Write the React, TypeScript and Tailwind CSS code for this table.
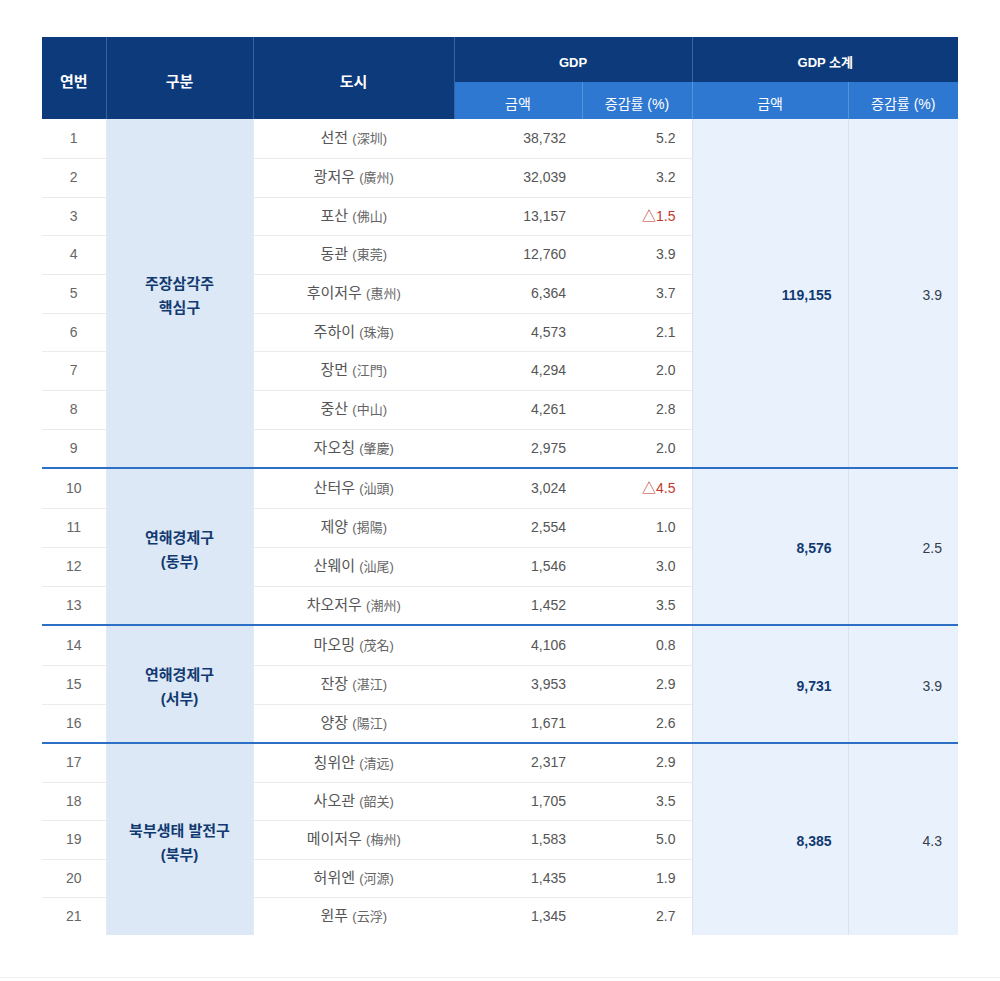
import React from "react";

type Row = { n: number; ko: string; zh: string; amt: string; rate: string; neg?: boolean; h: string };
type Group = { label: string[]; rows: Row[]; sub: string; subRate: string };

const groups: Group[] = [
  {
    label: ["주장삼각주", "핵심구"],
    sub: "119,155",
    subRate: "3.9",
    rows: [
      { n: 1, ko: "선전", zh: "深圳", amt: "38,732", rate: "5.2", h: "h-[39px]" },
      { n: 2, ko: "광저우", zh: "廣州", amt: "32,039", rate: "3.2", h: "h-[39px]" },
      { n: 3, ko: "포산", zh: "佛山", amt: "13,157", rate: "1.5", neg: true, h: "h-[38px]" },
      { n: 4, ko: "동관", zh: "東莞", amt: "12,760", rate: "3.9", h: "h-[39px]" },
      { n: 5, ko: "후이저우", zh: "惠州", amt: "6,364", rate: "3.7", h: "h-[39px]" },
      { n: 6, ko: "주하이", zh: "珠海", amt: "4,573", rate: "2.1", h: "h-[38px]" },
      { n: 7, ko: "장먼", zh: "江門", amt: "4,294", rate: "2.0", h: "h-[39px]" },
      { n: 8, ko: "중산", zh: "中山", amt: "4,261", rate: "2.8", h: "h-[39px]" },
      { n: 9, ko: "자오칭", zh: "肇慶", amt: "2,975", rate: "2.0", h: "h-[39px]" },
    ],
  },
  {
    label: ["연해경제구", "(동부)"],
    sub: "8,576",
    subRate: "2.5",
    rows: [
      { n: 10, ko: "산터우", zh: "汕頭", amt: "3,024", rate: "4.5", neg: true, h: "h-[40px]" },
      { n: 11, ko: "제양", zh: "揭陽", amt: "2,554", rate: "1.0", h: "h-[39px]" },
      { n: 12, ko: "산웨이", zh: "汕尾", amt: "1,546", rate: "3.0", h: "h-[39px]" },
      { n: 13, ko: "차오저우", zh: "潮州", amt: "1,452", rate: "3.5", h: "h-[39px]" },
    ],
  },
  {
    label: ["연해경제구", "(서부)"],
    sub: "9,731",
    subRate: "3.9",
    rows: [
      { n: 14, ko: "마오밍", zh: "茂名", amt: "4,106", rate: "0.8", h: "h-[40px]" },
      { n: 15, ko: "잔장", zh: "湛江", amt: "3,953", rate: "2.9", h: "h-[39px]" },
      { n: 16, ko: "양장", zh: "陽江", amt: "1,671", rate: "2.6", h: "h-[39px]" },
    ],
  },
  {
    label: ["북부생태 발전구", "(북부)"],
    sub: "8,385",
    subRate: "4.3",
    rows: [
      { n: 17, ko: "칭위안", zh: "清远", amt: "2,317", rate: "2.9", h: "h-[39px]" },
      { n: 18, ko: "사오관", zh: "韶关", amt: "1,705", rate: "3.5", h: "h-[38px]" },
      { n: 19, ko: "메이저우", zh: "梅州", amt: "1,583", rate: "5.0", h: "h-[39px]" },
      { n: 20, ko: "허위엔", zh: "河源", amt: "1,435", rate: "1.9", h: "h-[38px]" },
      { n: 21, ko: "윈푸", zh: "云浮", amt: "1,345", rate: "2.7", h: "h-[38px]" },
    ],
  },
];

export default function App() {
  return (
    <div
      className="w-[1000px] min-h-[981px] bg-white"
      style={{ fontFamily: '"Liberation Sans", Arial, "Noto Sans CJK KR", sans-serif' }}
    >
      <div className="h-[978px] border-b border-[#eeeeee] pt-[37px] pl-[42px]">
        <table className="w-[916px] table-fixed border-collapse text-[14px]">
          <colgroup>
            <col className="w-[64px]" />
            <col className="w-[147px]" />
            <col className="w-[201px]" />
            <col className="w-[128px]" />
            <col className="w-[110px]" />
            <col className="w-[156px]" />
            <col className="w-[110px]" />
          </colgroup>
          <thead>
            <tr className="h-[45px] bg-[#0d3a7b] font-bold text-white">
              <th rowSpan={2} className="border-r border-[#3763a3] pt-[8px] text-center text-[15px]">연번</th>
              <th rowSpan={2} className="border-r border-[#3763a3] pt-[8px] text-center text-[15px]">구분</th>
              <th rowSpan={2} className="border-r border-[#3763a3] pt-[8px] text-center text-[15px]">도시</th>
              <th colSpan={2} className="border-r border-[#3763a3] pt-[7px] text-center text-[13px]">GDP</th>
              <th colSpan={2} className="pt-[7px] text-center text-[13px]">GDP 소계</th>
            </tr>
            <tr className="h-[37px] bg-[#2e78d2] font-normal text-white">
              <th className="border-r border-[#5592dc] pt-[7px] text-center font-normal">금액</th>
              <th className="border-r border-[#5592dc] pt-[7px] text-center font-normal">증감률 (%)</th>
              <th className="border-r border-[#5592dc] pt-[7px] text-center font-normal">금액</th>
              <th className="pt-[7px] text-center font-normal">증감률 (%)</th>
            </tr>
          </thead>
          {groups.map((g, gi) => (
            <tbody
              key={gi}
              className={gi < groups.length - 1 ? "border-b-2 border-[#2d6fc4]" : ""}
            >
              {g.rows.map((r, ri) => {
                const last = ri === g.rows.length - 1;
                const rb = last ? "" : "border-b border-[#ebebeb]";
                return (
                  <tr key={r.n} className={r.h}>
                    <td className={`${rb} text-center text-[#666666]`}>{r.n}</td>
                    {ri === 0 && (
                      <td
                        rowSpan={g.rows.length}
                        className="border-x border-[#e3ebf5] bg-[#dce8f6] pt-[6px] text-center text-[15px] font-bold leading-[24px] text-[#123a70]"
                      >
                        {g.label.map((l, li) => (
                          <div key={li}>{l}</div>
                        ))}
                      </td>
                    )}
                    <td className={`${rb} text-center text-[15px] text-[#555555]`}>
                      {r.ko} <span className="text-[13px] text-[#666666]">({r.zh})</span>
                    </td>
                    <td className={`${rb} pr-[16px] text-right text-[#555555]`}>{r.amt}</td>
                    <td className={`${rb} pr-[16px] text-right ${r.neg ? "text-[#c0392b]" : "text-[#555555]"}`}>
                      {r.neg ? "△" : ""}
                      {r.rate}
                    </td>
                    {ri === 0 && (
                      <>
                        <td
                          rowSpan={g.rows.length}
                          className="border-x border-[#d8e3f0] bg-[#e9f2fc] pt-[4px] pr-[16px] text-right font-bold text-[#123a70]"
                        >
                          {g.sub}
                        </td>
                        <td
                          rowSpan={g.rows.length}
                          className="bg-[#e9f2fc] pt-[4px] pr-[16px] text-right text-[#333d4d]"
                        >
                          {g.subRate}
                        </td>
                      </>
                    )}
                  </tr>
                );
              })}
            </tbody>
          ))}
        </table>
      </div>
    </div>
  );
}
